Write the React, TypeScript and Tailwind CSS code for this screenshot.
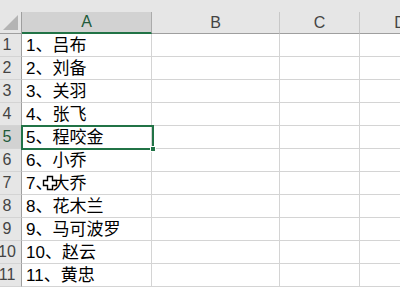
import React from "react";

const names = [
  "1、吕布",
  "2、刘备",
  "3、关羽",
  "4、张飞",
  "5、程咬金",
  "6、小乔",
  "7、大乔",
  "8、花木兰",
  "9、马可波罗",
  "10、赵云",
  "11、黄忠",
];

const font = { fontFamily: '"Liberation Sans", "Noto Sans CJK SC", sans-serif' };

function Cursor() {
  // Excel's thick white cross pointer
  return (
    <svg
      className="pointer-events-none absolute left-[42px] top-[175px]"
      width="16"
      height="16"
      viewBox="0 0 16 16"
    >
      <path
        d="M5.5 1.5h5v4h4v5h-4v4h-5v-4h-4v-5h4z"
        fill="#fff"
        stroke="#000"
        strokeWidth="1.4"
      />
    </svg>
  );
}

export default function App() {
  return (
    <div className="relative h-[290px] w-[400px] overflow-hidden bg-white" style={font}>
      <div className="h-[12px] bg-[#e6e6e6]" />

      {/* column headers */}
      <div className="flex h-[22px] bg-[#e6e6e6] text-[16px] text-[#444]">
        <div className="relative w-[22px] shrink-0 border-b border-r border-[#9f9f9f]">
          <div
            className="absolute bottom-[3px] right-[3px] h-[15px] w-[15px] bg-[#b4b4b4]"
            style={{ clipPath: "polygon(100% 0, 100% 100%, 0 100%)" }}
          />
        </div>
        <div className="flex w-[130px] shrink-0 items-center justify-center border-b-2 border-r border-b-[#217346] border-r-[#ababab] bg-[#d2d2d2] text-[#215a3a]">
          A
        </div>
        <div className="flex w-[128px] shrink-0 items-center justify-center border-b border-r border-b-[#9f9f9f] border-r-[#c8c8c8]">
          B
        </div>
        <div className="flex w-[80px] shrink-0 items-center justify-center border-b border-r border-b-[#9f9f9f] border-r-[#c8c8c8]">
          C
        </div>
        <div className="flex w-[80px] shrink-0 items-center justify-center border-b border-[#9f9f9f]">
          D
        </div>
      </div>

      {/* rows */}
      <div className="relative">
        {names.map((n, i) => {
          const sel = i === 4;
          return (
            <div key={n} className="flex h-[23px]">
              <div
                className={
                  "flex w-[22px] shrink-0 border-b border-r border-b-[#d4d4d4] border-r-[#9f9f9f] text-[16px] " +
                  (sel ? "bg-[#d2d2d2] text-[#215a3a]" : "bg-[#e6e6e6] text-[#444]")
                }
              >
                <div className="flex w-[14px] items-center justify-center leading-none">{i + 1}</div>
              </div>
              <div className="flex w-[130px] shrink-0 items-center border-b border-r border-[#d4d4d4] pl-[4px] text-[17px] leading-none text-black">
                {n}
              </div>
              <div className="w-[128px] shrink-0 border-b border-r border-[#d4d4d4]" />
              <div className="w-[80px] shrink-0 border-b border-r border-[#d4d4d4]" />
              <div className="flex-1 border-b border-[#d4d4d4]" />
            </div>
          );
        })}

        {/* selected cell A5 */}
        <div className="pointer-events-none absolute left-[21px] top-[91px] h-[25px] w-[133px] border-2 border-[#217346]">
          <div className="absolute -bottom-[4px] -right-[4px] h-[6px] w-[6px] border border-white bg-[#217346]" />
        </div>
      </div>

      <Cursor />
    </div>
  );
}
